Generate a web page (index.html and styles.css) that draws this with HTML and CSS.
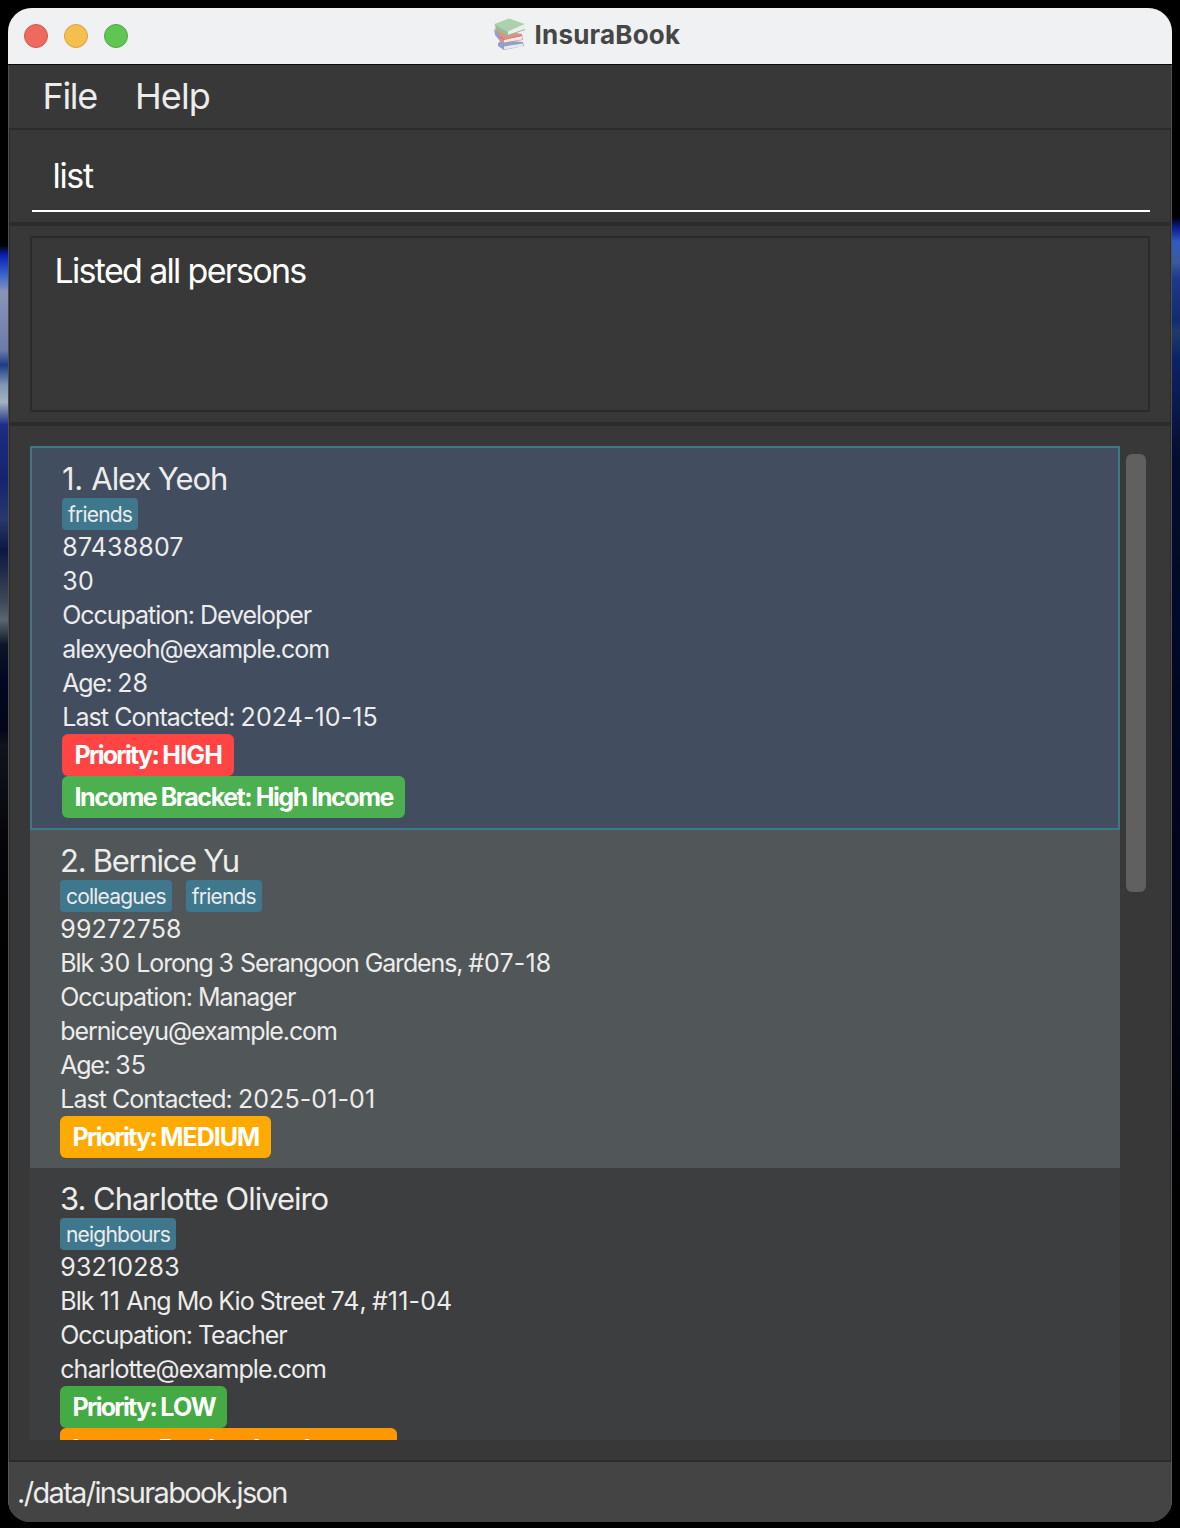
FILE: index.html
```html
<!DOCTYPE html>
<html lang="en">
<head>
<meta charset="utf-8">
<title>InsuraBook</title>
<link rel="stylesheet" href="styles.css">
</head>
<body>
<div class="window">
  <header class="titlebar">
    <div class="lights"><span class="light close"></span><span class="light minimize"></span><span class="light zoom"></span></div>
    <svg class="books" viewBox="0 0 32 32" width="32" height="32">
      <path d="M4 25l5-3 20 2 1 4-20 4-6-4z" fill="#8a9ac6"/>
      <path d="M10 28.500l19-3v3l-19 3z" fill="#e8e8e8"/>
      <path d="M1 10l5 2 22 4 1 6-19 3-4-1z" fill="#dc8b80"/>
      <path d="M0 11l5 4 1 8-5-6z" fill="#8a9ac6"/>
      <path d="M10 21.500l18-3.500v3.500l-18 3z" fill="#ebe9e6"/>
      <path d="M6 18l4 3 18-4v1l-18 4-4-2z" fill="#cf7368"/>
      <path d="M0.500 6l14.500-5.500 16 5.500-17 8z" fill="#a6cfa8"/>
      <path d="M0.500 6l13.500 8v4L2 11z" fill="#8dbb91"/>
      <path d="M14 13.500l17-7.500v5l-17 6z" fill="#eceeec"/>
      <path d="M13.500 17.500l17.500-6" stroke="#8dbb91" fill="none"/>
    </svg>
    <h1 class="title">InsuraBook</h1>
  </header>
  <nav class="menu"><span class="file">File</span><span class="help">Help</span></nav>
  <main class="content">
    <section class="command"><div class="command-field">list</div></section>
    <section class="result"><div class="result-box">Listed all persons</div></section>
    <section class="persons">
      <div class="list">
        <article class="card selected">
          <h2 class="name"><span class="index">1. </span>Alex Yeoh</h2>
          <div class="tags"><span class="tag">friends</span></div>
          <p><span class="num">87438807</span></p>
          <p><span class="num">30</span></p>
          <p>Occupation: Developer</p>
          <p class="email">alexyeoh@example.com</p>
          <p class="age">Age: <span class="num">28</span></p>
          <p class="contacted">Last Contacted: <span class="date">2024-10-15</span></p>
          <div class="pill high">Priority: <span class="level">HIGH</span></div>
          <div class="pill income-high">Income Bracket: High Income</div>
        </article>
        <article class="card even">
          <h2 class="name">2. Bernice Yu</h2>
          <div class="tags"><span class="tag">colleagues</span><span class="tag">friends</span></div>
          <p><span class="num">99272758</span></p>
          <p class="address">Blk <span class="num">30</span> Lorong <span class="num">3</span> Serangoon Gardens, <span class="num">#07-18</span></p>
          <p>Occupation: Manager</p>
          <p class="email">berniceyu@example.com</p>
          <p class="age">Age: <span class="num">35</span></p>
          <p class="contacted">Last Contacted: <span class="date">2025-01-01</span></p>
          <div class="pill medium">Priority: <span class="level">MEDIUM</span></div>
        </article>
        <article class="card odd">
          <h2 class="name">3. Charlotte Oliveiro</h2>
          <div class="tags"><span class="tag">neighbours</span></div>
          <p><span class="num">93210283</span></p>
          <p class="address">Blk <span class="num">11</span> Ang Mo Kio Street <span class="num">74</span>, <span class="num">#11-04</span></p>
          <p>Occupation: Teacher</p>
          <p class="email">charlotte@example.com</p>
          <div class="pill low">Priority: <span class="level">LOW</span></div>
          <div class="pill income-low">Income Bracket: Low Income</div>
        </article>
      </div>
      <div class="scrollbar"><div class="thumb"></div></div>
    </section>
  </main>
  <footer class="status">./data/insurabook.json</footer>
</div>
</body>
</html>
```
FILE: styles.css
```css
* { box-sizing: border-box; }
body {
  margin: 0; height: 1528px; padding: 8px 8px 6px; overflow: hidden;
  font-family: Inter, "Liberation Sans", sans-serif; color: #ececec;
  background:
    linear-gradient(#000 0 245px, #0a1eb0 255px, #3b66cc 275px, #8a94b8 292px, #6c7ba8 350px, #1b3d86 365px, #8096b4 385px, #a3b2c2 402px, #1d2c86 425px, #16246e 480px, #28386c 520px, #0c1740 550px, #3c4858 600px, #5a6670 620px, #0c1528 645px, #020824 680px, #020516 730px, #11141c 745px, #020408 850px, #000 950px) 0 0 / 8px 100% no-repeat,
    linear-gradient(#000 0 217px, #0a1e90 228px, #2f5cc0 242px, #3a5aa0 262px, #1c3a8c 278px, #122c72 320px, #203a68 332px, #0e2066 360px, #0c1a50 400px, #040c30 460px, #020620 700px, #020410 1000px, #000 1200px) 100% 0 / 8px 100% no-repeat,
    #000;
}
h1, h2, p { margin: 0; font-weight: 400; }
.window { height: 1514px; border-radius: 24px 24px 22px 22px; overflow: hidden; display: flex; flex-direction: column; background: #383838; box-shadow: inset 0 0 0 1px #505050; }
.titlebar { height: 57px; flex: none; background: #f0f1f3; border-bottom: 1px solid #0c0c0c; display: grid; grid-template-columns: 462px 32px auto; column-gap: 8px; padding-left: 16px; align-items: center; }
.lights { display: flex; gap: 16px; }
.light { width: 24px; height: 24px; border-radius: 50%; border: 1px solid; }
.close { background: #ec6a5e; border-color: #d1574b; }
.minimize { background: #f4bf4f; border-color: #d8a13d; }
.zoom { background: #61c554; border-color: #50a73f; }
.books { margin-bottom: 4px; opacity: 0.92; }
.title { color: #464646; font-size: 26px; font-weight: 700; letter-spacing: 0.2px; padding: 0 0 3px 0.500px; }
.menu { height: 63px; flex: none; display: flex; gap: 38px; padding-left: 34.500px; font-size: 36px; line-height: 63px; }
.file { letter-spacing: -1.300px; }
.help { letter-spacing: -0.9px; }
.content { flex: none; border: 1px solid #2b2b2b; border-width: 2px 1px; margin: 0 1px; display: flex; flex-direction: column; }
.command { height: 92px; padding: 11px 20px 10px 22px; }
.command-field { height: 71px; border-bottom: 2px solid #fff; color: #fff; font-size: 34px; line-height: 69px; padding-left: 20.500px; letter-spacing: -1.300px; }
.result { border: solid #2b2b2b; border-width: 4px 0; padding: 10px 20px; height: 204px; }
.result-box { height: 176px; border: 2px solid #2b2b2b; color: #fff; font-size: 34px; line-height: 42px; padding: 12px 22.500px; letter-spacing: -1.680px; }
.persons { height: 1034px; padding: 20px; display: flex; }
.list { width: 1090px; flex: none; height: 994px; overflow: hidden; }
.scrollbar { flex: none; padding: 8px 4px 8px 6px; }
.thumb { width: 20px; height: 438px; border-radius: 6px; background: #606060; }
.card { padding: 10px 30px; font-size: 25px; line-height: 34px; letter-spacing: -1.050px; }
.card p { padding-left: 0.300px; }
.selected { background: #424d5f; border: 2px solid #3f788c; }
.even { background: #515658; }
.odd { background: #3c3e3f; }
.num { letter-spacing: 0.15px; }
.date { letter-spacing: 0.1px; }
.age { letter-spacing: -1.300px; }
.contacted { letter-spacing: -0.94px; }
.even .contacted { letter-spacing: -0.98px; }
.even .email { letter-spacing: -1.110px; }
.odd .email { letter-spacing: -0.97px; }
.even .address { letter-spacing: -1.140px; }
.odd .address { letter-spacing: -0.98px; }
.name { font-size: 31px; line-height: 40px; padding-top: 1px; height: 40px; letter-spacing: -1.080px; }
.index { letter-spacing: -0.3px; }
.even .name { letter-spacing: -1.280px; }
.odd .name { letter-spacing: -1.020px; }
.tags { display: flex; gap: 14px; height: 32px; font-size: 21px; line-height: 33.500px; letter-spacing: -0.79px; }
.tag { background: #3f788c; border-radius: 4px; padding: 0 6px; }
.pill { width: fit-content; height: 42px; line-height: 42px; padding: 0 11.500px 0 12.500px; border-radius: 6px; color: #fff; font-weight: 700; letter-spacing: -1.430px; }
.high, .medium, .low { letter-spacing: -1.700px; }
.level { letter-spacing: -0.85px; }
.medium .level { letter-spacing: -1.050px; }
.high { background: #f44; }
.medium { background: #fa0; }
.low { background: #4a4; }
.income-high { background: #4caf50; }
.income-low { background: #ff9800; letter-spacing: -1.460px; }
.status { flex: 1; background: #444; border: solid #585858; border-width: 0 1px 1px; border-radius: 0 0 22px 22px; padding-left: 8px; font-size: 29px; line-height: 62px; letter-spacing: -1.680px; }
```
